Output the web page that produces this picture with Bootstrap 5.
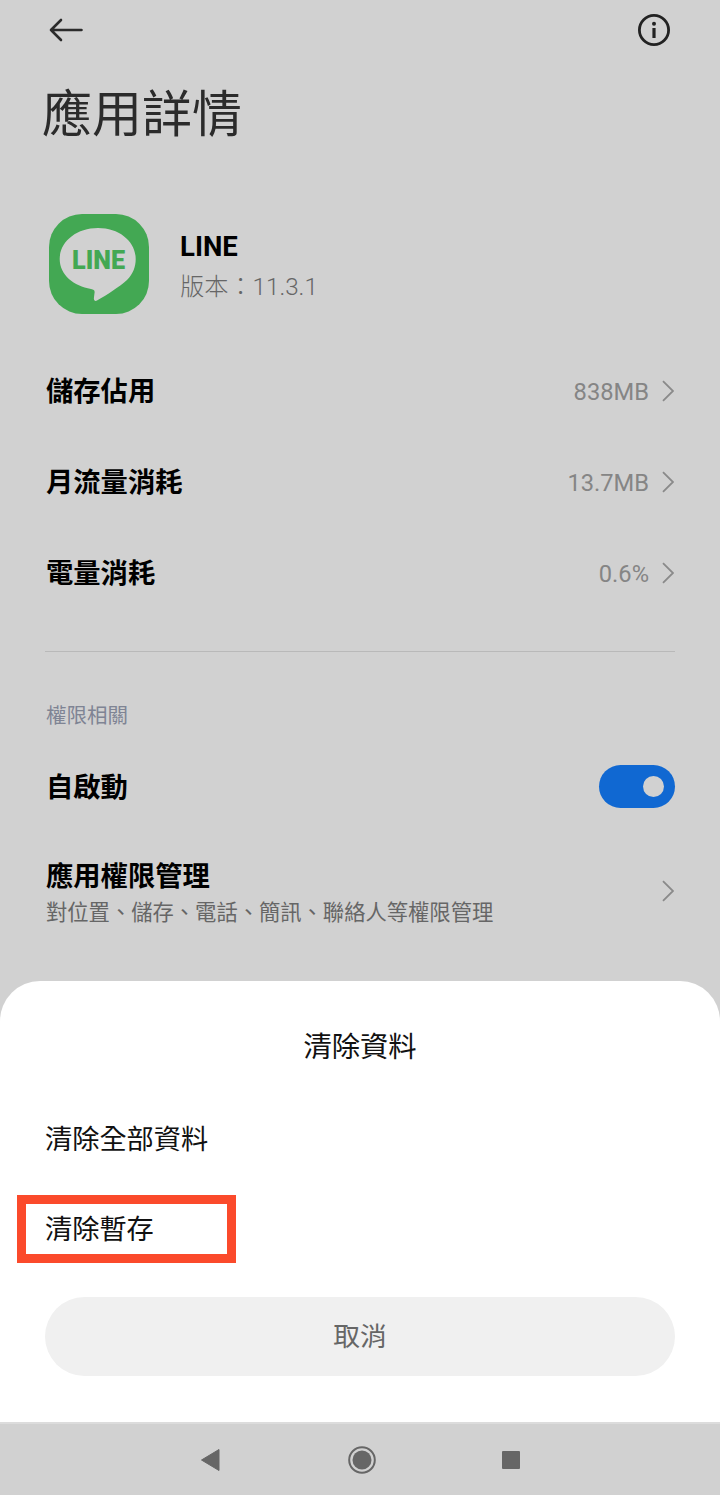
<!DOCTYPE html>
<html lang="zh-Hant">

<head>
    <meta charset="UTF-8">
    <meta name="viewport" content="width=device-width, initial-scale=1.0">
    <title>應用詳情</title>
    <link rel="stylesheet" href="https://cdn.jsdelivr.net/npm/bootstrap@5.3.3/dist/css/bootstrap.min.css">
    <style>
        html, body { height: 1495px; overflow: hidden; }
        body { width: 720px; background: #d1d1d1; font-family: Roboto, "Noto Sans CJK TC", sans-serif; color: #000; display: flex; flex-direction: column; }
        .app-main { height: 981px; padding: 0 45px; flex: none; }
        .top-bar { height: 60px; padding: 0 4px; }
        .page-title { font-size: 50px; font-weight: 400; color: #2b2b2b; line-height: 60px; margin: 25px 0 0 -3px; }
        .app-head { margin-top: 69px; padding-left: 4px; height: 100px; gap: 32px; }
        .app-text { padding-top: 5px; }
        .app-name { font-size: 27.5px; font-weight: 700; line-height: 34px; margin-left: -1px; }
        .app-ver { font-size: 24.2px; color: #666; line-height: 34px; margin-top: 6px; margin-left: -1px; font-weight: 300; }
        .set-list { margin-top: 31px; }
        .set-row { height: 91px; padding-top: 2px; }
        .set-label { font-size: 27.3px; font-weight: 700; line-height: 34px; margin-left: 1px; }
        .set-val { font-size: 23.7px; color: #858585; margin-right: 13px; padding-top: 2px; }
        .chev { width: 12px; height: 22px; margin-right: 1px; }
        .line-sep { border-top: 1.5px solid #b9b9b9; margin-top: 33px; }
        .sec-title { font-size: 20.5px; color: #7f8494; line-height: 28px; margin-top: 50px; margin-left: 1px; }
        .auto-row { height: 76px; margin-top: 18px; }
        .auto-label { margin-top: 4px; }
        .sw-track { width: 76px; height: 43px; border-radius: 22px; background: #1068d2; padding-right: 11px; }
        .sw-knob { width: 21px; height: 21px; border-radius: 50%; background: #d1d1d1; }
        .perm-row { margin-top: 36px; }
        .perm-sub { font-size: 21.3px; color: #666; line-height: 28px; margin-top: 5px; margin-left: 1px; }
        .perm-chev { margin-bottom: 6px; }
        .sheet { height: 441px; flex: none; background: #fff; border-radius: 40px 40px 0 0; padding: 0 45px; position: relative; }
        .sheet-title { font-size: 28.3px; line-height: 40px; padding-top: 47px; box-sizing: content-box; height: 40px; color: #111; }
        .sheet-item { font-size: 27.2px; line-height: 40px; color: #111; }
        .item-one { margin-top: 52px; }
        .item-two { margin-top: 50px; }
        .red-box { position: absolute; left: 17px; top: 214px; width: 219px; height: 68px; border: 9px solid #fb4a2b; }
        .cancel-btn { display: block; width: 100%; height: 79px; margin-top: 47px; border: 0; border-radius: 40px; background: #f0f0f0; color: #666; font-size: 26.7px; padding: 1px 0 0; }
        .nav-bar { height: 73px; flex: none; border-top: 2px solid #dcdcdc; background: #d1d1d1; }
        .nav-slot { width: 28px; height: 28px; }
        .nav-mid { margin: 0 121px 0 124px; }
    </style>
</head>

<body>
    <div class="app-main">
        <div class="top-bar d-flex align-items-center justify-content-between">
            <svg width="34" height="24" viewBox="0 0 34 24" fill="none" stroke="#2b2b2b" stroke-width="2.6" stroke-linecap="round" stroke-linejoin="round">
                <path d="M32.5 12H2M12 2 2 12l10 10" />
            </svg>
            <svg width="34" height="34" viewBox="0 0 34 34" fill="none" stroke="#222" stroke-width="2.8">
                <circle cx="17" cy="17" r="14.6" />
                <circle cx="17" cy="10.8" r="2" fill="#222" stroke="none" />
                <path d="M17 15v10" stroke-width="3.2" />
            </svg>
        </div>

        <h1 class="page-title">應用詳情</h1>

        <div class="app-head d-flex align-items-center">
            <svg width="100" height="100" viewBox="0 0 100 100">
                <rect width="100" height="100" rx="33" fill="#43a853" />
                <path d="M49 14C27 14 10.700 28 10.700 45c0 16 14.300 27 31.300 30 3 .5 4 1.500 3.500 4l-.6 5c-.2 2.500 1.200 3.500 3.100 2.500C58 81 70 73 78 66c6-6 8.700-13 8.700-21C86.700 28 71 14 49 14z" fill="#d1d1d1" />
                <text x="49.500" y="55" text-anchor="middle" font-family="Roboto, sans-serif" font-weight="900" font-size="25" fill="#43a853" textLength="53" lengthAdjust="spacingAndGlyphs">LINE</text>
            </svg>
            <div class="app-text">
                <div class="app-name">LINE</div>
                <div class="app-ver">版本：11.3.1</div>
            </div>
        </div>

        <div class="set-list">
            <div class="set-row d-flex align-items-center justify-content-between">
                <span class="set-label">儲存佔用</span>
                <span class="d-flex align-items-center"><span class="set-val">838MB</span>
                    <svg class="chev" viewBox="0 0 12 22" fill="none" stroke="#8a8a8a" stroke-width="1.800">
                        <path d="M1 1.200 11 11 1 20.800" />
                    </svg></span>
            </div>
            <div class="set-row d-flex align-items-center justify-content-between">
                <span class="set-label">月流量消耗</span>
                <span class="d-flex align-items-center"><span class="set-val">13.7MB</span>
                    <svg class="chev" viewBox="0 0 12 22" fill="none" stroke="#8a8a8a" stroke-width="1.800">
                        <path d="M1 1.200 11 11 1 20.800" />
                    </svg></span>
            </div>
            <div class="set-row d-flex align-items-center justify-content-between">
                <span class="set-label">電量消耗</span>
                <span class="d-flex align-items-center"><span class="set-val">0.6%</span>
                    <svg class="chev" viewBox="0 0 12 22" fill="none" stroke="#8a8a8a" stroke-width="1.800">
                        <path d="M1 1.200 11 11 1 20.800" />
                    </svg></span>
            </div>
        </div>

        <div class="line-sep"></div>
        <div class="sec-title">權限相關</div>

        <div class="auto-row d-flex align-items-center justify-content-between">
            <span class="set-label auto-label">自啟動</span>
            <div class="sw-track d-flex align-items-center justify-content-end">
                <div class="sw-knob"></div>
            </div>
        </div>

        <div class="perm-row d-flex align-items-center justify-content-between">
            <div>
                <div class="set-label">應用權限管理</div>
                <div class="perm-sub">對位置、儲存、電話、簡訊、聯絡人等權限管理</div>
            </div>
            <svg class="chev perm-chev" viewBox="0 0 12 22" fill="none" stroke="#8a8a8a" stroke-width="1.800">
                <path d="M1 1.200 11 11 1 20.800" />
            </svg>
        </div>
    </div>

    <div class="sheet">
        <div class="sheet-title text-center">清除資料</div>
        <div class="sheet-item item-one">清除全部資料</div>
        <div class="sheet-item item-two">清除暫存</div>
        <div class="red-box"></div>
        <button class="cancel-btn" type="button">取消</button>
    </div>

    <div class="nav-bar d-flex align-items-center justify-content-center">
        <div class="d-flex align-items-center">
            <svg class="nav-slot" viewBox="0 0 28 28" fill="#666">
                <path d="M5.500 14 23 3.500v21z" stroke="#666" stroke-width="1" stroke-linejoin="round" />
            </svg>
            <svg class="nav-slot nav-mid" viewBox="0 0 28 28" fill="#666">
                <circle cx="14" cy="14" r="12.800" fill="none" stroke="#666" stroke-width="2" />
                <circle cx="14" cy="14" r="9.500" />
            </svg>
            <svg class="nav-slot" viewBox="0 0 28 28" fill="#666">
                <rect x="5" y="5" width="18" height="18" rx="1" />
            </svg>
        </div>
    </div>

    <script src="https://cdn.jsdelivr.net/npm/bootstrap@5.3.3/dist/js/bootstrap.bundle.min.js"></script>
</body>

</html>
